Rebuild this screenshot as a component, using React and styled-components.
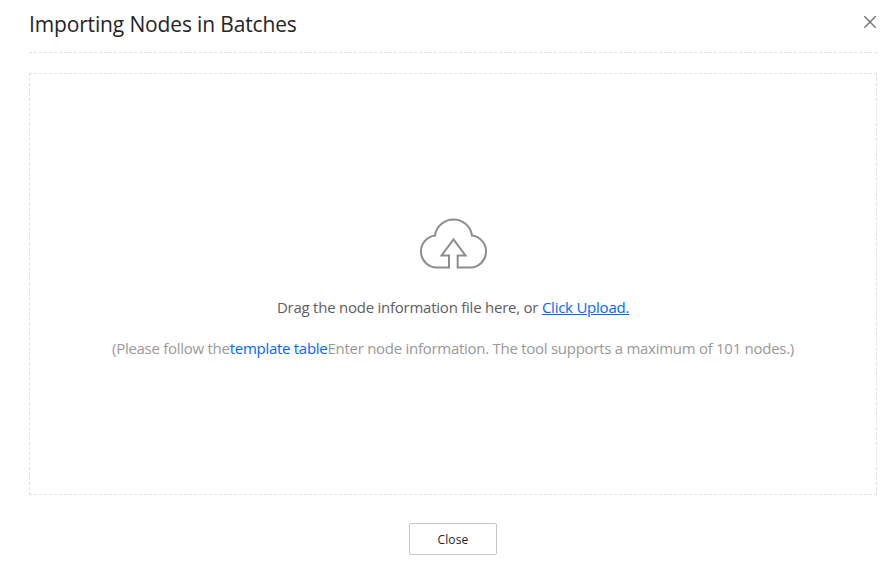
import React from "react";
import styled, { createGlobalStyle } from "styled-components";

const GlobalStyle = createGlobalStyle`
  * { box-sizing: border-box; }
  body { margin: 0; background: #fff; font-family: "Open Sans", "Noto Sans", sans-serif; }
`;

const Dialog = styled.main`
  display: flex;
  flex-direction: column;
  height: 573px;
  padding: 0 19px 18px 29px;
  overflow: hidden;
`;

const Header = styled.header`
  display: flex;
  justify-content: space-between;
  height: 53px;
  border-bottom: 1px dashed #dfe1e9;
`;

const Title = styled.h1`
  margin: 10px 0 0;
  font-size: 21px;
  font-weight: 400;
  line-height: 28px;
  letter-spacing: -0.15px;
  white-space: nowrap;
  color: #252525;
`;

const CloseIconButton = styled.button`
  display: block;
  width: 14px;
  height: 14px;
  margin: 15px 0 0;
  padding: 0;
  border: 0;
  background: none;
  svg { display: block; }
`;

const DropZone = styled.section`
  display: flex;
  flex-direction: column;
  align-items: center;
  height: 422px;
  margin-top: 20px;
  padding-top: 143px;
  border: 1px dashed #e1e2e9;
`;

const CloudIcon = styled.svg`
  display: block;
  width: 70px;
  height: 54px;
  fill: none;
  stroke: #8d8d8d;
  stroke-width: 2;
`;

const Message = styled.p`
  margin: ${(p) => p.$top}px 0 0;
  font-size: 15px;
  line-height: 22px;
  letter-spacing: ${(p) => p.$spacing}px;
  white-space: nowrap;
  color: ${(p) => p.$color};
`;

const Link = styled.a`
  color: #0067ff;
  text-decoration: ${(p) => (p.$underlined ? "underline" : "none")};
  text-decoration-thickness: 1px;
  text-underline-offset: 1px;
`;

const Footer = styled.footer`
  display: flex;
  justify-content: center;
  margin-top: 28px;
`;

const CloseButton = styled.button`
  width: 88px;
  height: 32px;
  padding: 1px 0 0;
  border: 1px solid #c4c6c8;
  border-radius: 2px;
  background: #fff;
  font: 400 12px/29px "Open Sans", "Noto Sans", sans-serif;
  letter-spacing: 0.15px;
  color: #252525;
`;

export default function App() {
  return (
    <>
      <GlobalStyle />
      <Dialog>
        <Header>
          <Title>Importing Nodes in Batches</Title>
          <CloseIconButton aria-label="Close dialog">
            <svg width="14" height="14" viewBox="0 0 14 14">
              <path d="M1.3 1.3 12.7 12.7M12.7 1.3 1.3 12.7" stroke="#777" strokeWidth="1.5" />
            </svg>
          </CloseIconButton>
        </Header>
        <DropZone>
          <CloudIcon viewBox="-0.5 0 70 54" aria-hidden="true">
            <path d="M30.5 50.6H18.1A16.12 16.12 0 0 1 16.5 18.5A18.7 18.7 0 0 1 53.5 18.5A16.12 16.12 0 0 1 51.9 50.6H39.2V38.5H47L35 22.5L23 38.5H30.5Z" />
          </CloudIcon>
          <Message $top={25} $spacing={-0.24} $color="#5d5d5d">
            Drag the node information file here, or{" "}
            <Link $underlined>Click Upload.</Link>
          </Message>
          <Message $top={19} $spacing={-0.275} $color="#999">
            (Please follow the<Link>template table</Link>Enter node information. The tool supports a maximum of 101 nodes.)
          </Message>
        </DropZone>
        <Footer>
          <CloseButton>Close</CloseButton>
        </Footer>
      </Dialog>
    </>
  );
}
